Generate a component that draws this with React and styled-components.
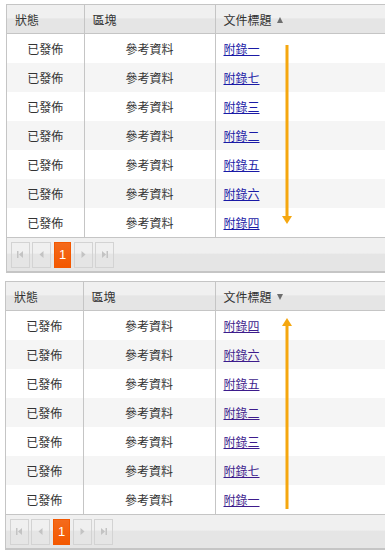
import React from "react";
import styled, { createGlobalStyle } from "styled-components";

const GlobalStyle = createGlobalStyle`
  html, body {
    margin: 0;
    padding: 0;
    background: #fff;
    overflow: hidden;
  }
  body {
    font-family: "Noto Sans CJK TC", "Noto Sans", sans-serif;
    font-size: 12px;
    color: #333;
  }
`;

const ascRows = ["附錄一", "附錄七", "附錄三", "附錄二", "附錄五", "附錄六", "附錄四"];
const descRows = ["附錄四", "附錄六", "附錄五", "附錄二", "附錄三", "附錄七", "附錄一"];

const Page = styled.div`
  display: flex;
  flex-direction: column;
  gap: 8px;
  padding-top: 4px;
`;

const Grid = styled.div`
  position: relative;
  margin-left: ${(p) => p.$left}px;
  width: 386px;
  border: 1px solid #c5c5c5;
  border-right: none;
  background: #fff;
`;

const Table = styled.table`
  width: 100%;
  border-collapse: collapse;
  table-layout: fixed;
`;

const HeadCell = styled.th`
  height: 28px;
  padding: 0 0 0 8px;
  text-align: left;
  font-weight: normal;
  color: #333;
  background: linear-gradient(#f0f0f0 0, #f0f0f0 45%, #e5e5e5 50%, #e5e5e5 100%);
  border-bottom: 1px solid #c5c5c5;
  border-left: ${(p) => (p.$first ? "none" : "1px solid #c5c5c5")};
  white-space: nowrap;
`;

const SortIcon = styled.span`
  display: inline-block;
  margin-left: 5px;
  vertical-align: 2px;
  width: 0;
  height: 0;
  border-left: 3.5px solid transparent;
  border-right: 3.5px solid transparent;
  ${(p) =>
    p.$dir === "asc"
      ? "border-bottom: 6px solid #6e6e6e;"
      : "border-top: 6px solid #6e6e6e;"}
`;

const Row = styled.tr`
  background: ${(p) => (p.$alt ? "#f5f5f5" : "#fff")};
`;

const Cell = styled.td`
  height: 29px;
  padding: 0;
  padding-left: ${(p) => (p.$align === "left" ? "8px" : "0")};
  text-align: ${(p) => p.$align || "center"};
  border-left: ${(p) => (p.$first ? "none" : "1px solid #c5c5c5")};
  color: #333;
  white-space: nowrap;
`;

const Link = styled.a`
  color: ${(p) => (p.$visited ? "#3d1c8c" : "#1a1aa6")};
  text-decoration: underline;
`;

const Pager = styled.div`
  display: flex;
  align-items: center;
  gap: 2px;
  height: 33px;
  padding-left: 4px;
  border-top: 1px solid #c5c5c5;
  border-bottom: 1px solid #c5c5c5;
  background: linear-gradient(#f0f0f0 0, #f0f0f0 45%, #e5e5e5 50%, #e5e5e5 100%);
`;

const PageButton = styled.span`
  display: flex;
  align-items: center;
  justify-content: center;
  box-sizing: border-box;
  width: ${(p) => (p.$current ? "17px" : "19px")};
  height: 26px;
  margin: ${(p) => (p.$current ? "0 1px" : "0")};
  border: 1px solid ${(p) => (p.$current ? "#f35800" : "#d3d3d3")};
  background: ${(p) => (p.$current ? "linear-gradient(#f46a1c, #f35800)" : "transparent")};
  color: #fff;
  font-family: "Liberation Sans", Arial, sans-serif;
  font-size: 13px;
`;

const ArrowLayer = styled.svg`
  position: absolute;
  left: ${(p) => p.$x - 6}px;
  top: ${(p) => p.$top}px;
  overflow: visible;
`;

const PagerIcon = ({ kind }) => {
  const c = "#c3c3c3";
  if (kind === "first")
    return (
      <svg width="9" height="9" viewBox="0 0 9 9">
        <rect x="1" y="1" width="1.5" height="7" fill={c} />
        <path d="M7 1 L3 4.5 L7 8 Z" fill={c} />
      </svg>
    );
  if (kind === "prev")
    return (
      <svg width="9" height="9" viewBox="0 0 9 9">
        <path d="M6.5 1 L2.5 4.5 L6.5 8 Z" fill={c} />
      </svg>
    );
  if (kind === "next")
    return (
      <svg width="9" height="9" viewBox="0 0 9 9">
        <path d="M2.5 1 L6.5 4.5 L2.5 8 Z" fill={c} />
      </svg>
    );
  return (
    <svg width="9" height="9" viewBox="0 0 9 9">
      <path d="M2 1 L6 4.5 L2 8 Z" fill={c} />
      <rect x="6.5" y="1" width="1.5" height="7" fill={c} />
    </svg>
  );
};

const OrangeArrow = ({ x, top, length, dir }) => {
  const col = "#f5a70f";
  return (
    <ArrowLayer $x={x} $top={top} width="12" height={length}>
      {dir === "down" ? (
        <>
          <rect x="4.5" y="0" width="3" height={length - 7} fill={col} />
          <path d={`M1 ${length - 8} L11 ${length - 8} L6 ${length} Z`} fill={col} />
        </>
      ) : (
        <>
          <rect x="4.5" y="7" width="3" height={length - 7} fill={col} />
          <path d="M1 8 L11 8 L6 0 Z" fill={col} />
        </>
      )}
    </ArrowLayer>
  );
};

const DataGrid = ({ rows, dir, left, col2, visited, arrow }) => (
  <Grid $left={left}>
    <Table>
      <colgroup>
        <col style={{ width: 77 }} />
        <col style={{ width: col2 }} />
        <col />
      </colgroup>
      <thead>
        <tr>
          <HeadCell $first>狀態</HeadCell>
          <HeadCell>區塊</HeadCell>
          <HeadCell>
            文件標題
            <SortIcon $dir={dir} />
          </HeadCell>
        </tr>
      </thead>
      <tbody>
        {rows.map((title, i) => (
          <Row key={title} $alt={i % 2 === 1}>
            <Cell $first>已發佈</Cell>
            <Cell>參考資料</Cell>
            <Cell $align="left">
              <Link href="#" $visited={visited}>
                {title}
              </Link>
            </Cell>
          </Row>
        ))}
      </tbody>
    </Table>
    <Pager>
      <PageButton>
        <PagerIcon kind="first" />
      </PageButton>
      <PageButton>
        <PagerIcon kind="prev" />
      </PageButton>
      <PageButton $current>1</PageButton>
      <PageButton>
        <PagerIcon kind="next" />
      </PageButton>
      <PageButton>
        <PagerIcon kind="last" />
      </PageButton>
    </Pager>
    <OrangeArrow {...arrow} />
  </Grid>
);

export default function App() {
  return (
    <>
      <GlobalStyle />
      <Page>
        <DataGrid
          rows={ascRows}
          dir="asc"
          left={6}
          col2={131}
          arrow={{ x: 280, top: 40, length: 179, dir: "down" }}
        />
        <DataGrid
          rows={descRows}
          dir="desc"
          left={5}
          col2={132}
          visited
          arrow={{ x: 281, top: 36, length: 191, dir: "up" }}
        />
      </Page>
    </>
  );
}
